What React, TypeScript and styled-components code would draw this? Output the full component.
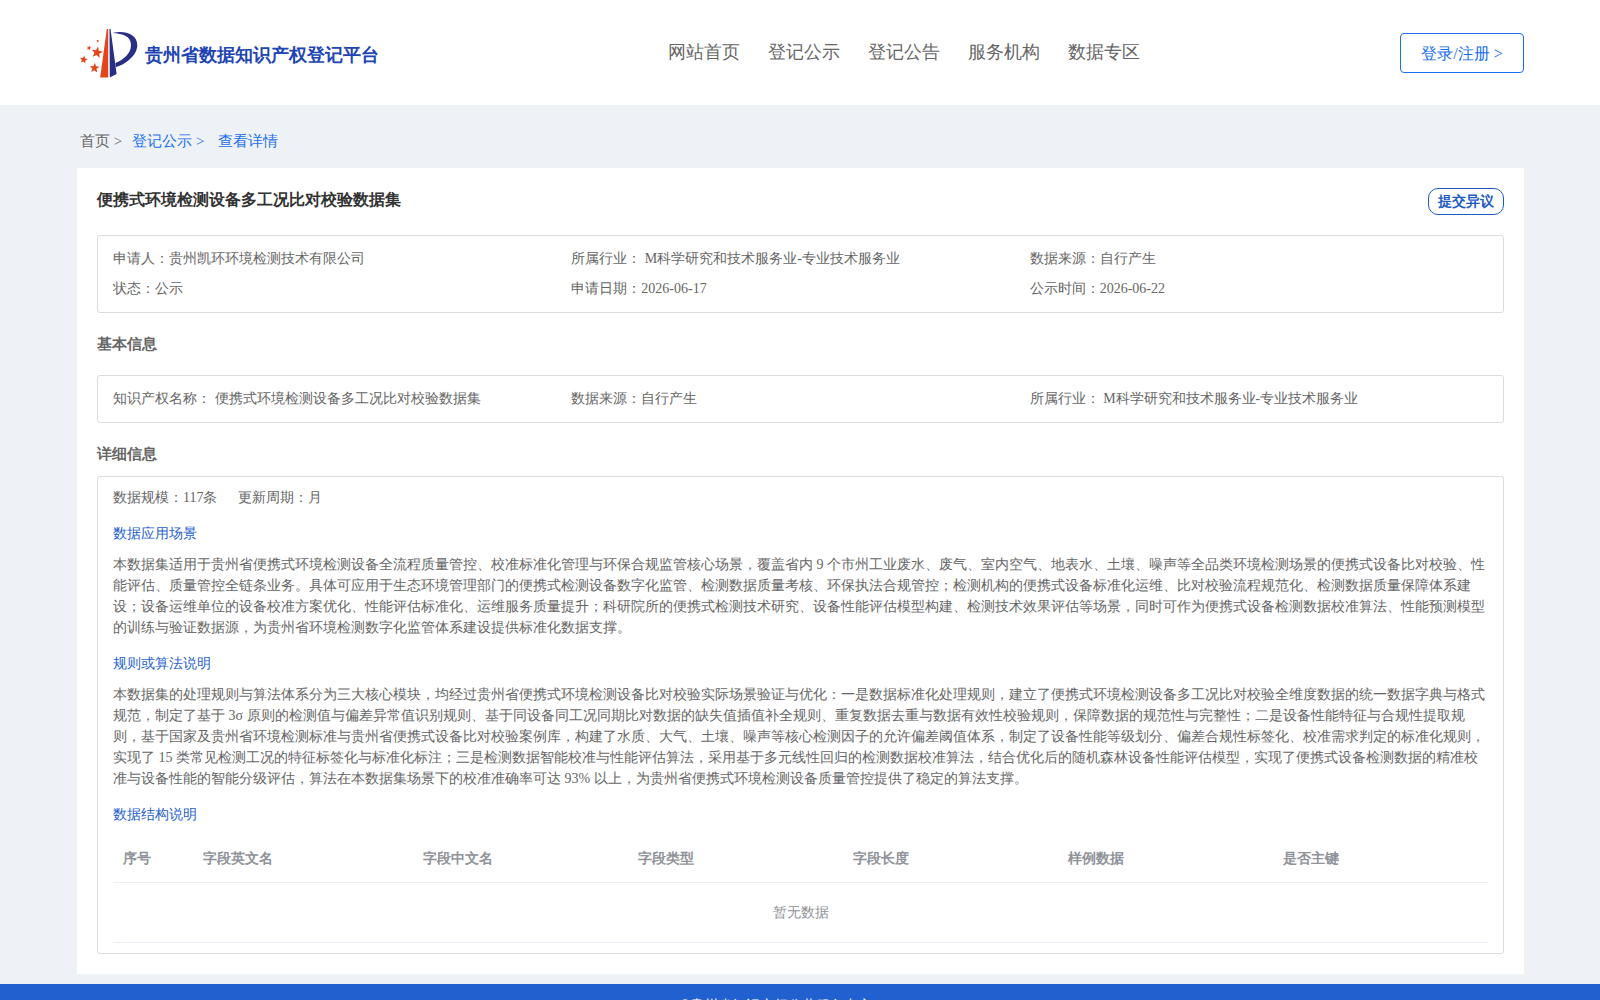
import React from "react";
import styled, { createGlobalStyle } from "styled-components";

const GlobalStyle = createGlobalStyle`
  *, *::before, *::after { box-sizing: border-box; }
  body {
    margin: 0;
    background: #eef2f6;
    color: #666;
    font-family: "Liberation Serif", serif;
    font-size: 14px;
    line-height: 20px;
  }
  h1, h2, h3, p, dl, dd { margin: 0; }
  a { text-decoration: none; color: inherit; }
`;

const Header = styled.header`
  display: flex;
  align-items: center;
  justify-content: space-between;
  height: 105px;
  padding: 0 76px 0 77px;
  background: #fff;
`;

const Brand = styled.a`
  display: flex;
  align-items: center;
  gap: 6px;
  padding: 4px 28px 0 0;
  color: #2144b4;
  font-size: 18px;
  font-weight: 700;
  line-height: 26px;
`;

const LogoMark = styled.svg`
  width: 62px;
  height: 54px;
`;

const Nav = styled.nav`
  display: flex;
  gap: 28px;
  padding-bottom: 2px;
  font-size: 18px;
  line-height: 26px;
`;

const LoginButton = styled.button`
  min-width: 124px;
  height: 40px;
  padding: 3px 20px 0;
  border: 1px solid #1a6fef;
  border-radius: 4px;
  background: #fff;
  color: #1a6fef;
  font-family: inherit;
  font-size: 16px;
`;

const Main = styled.main`
  padding: 0 76px 10px 77px;
`;

const Breadcrumb = styled.nav`
  display: flex;
  align-items: center;
  height: 63px;
  padding: 8px 3px 0;
  font-size: 15px;
`;

const Crumb = styled.a<{ $active?: boolean; $gap?: number }>`
  margin-right: ${(p) => p.$gap ?? 0}px;
  color: ${(p) => (p.$active ? "#1a6fef" : "#666")};
`;

const Panel = styled.article`
  padding: 20px;
  background: #fff;
`;

const TitleRow = styled.div`
  display: flex;
  align-items: flex-start;
  justify-content: space-between;
  height: 47px;
`;

const Title = styled.h1`
  color: #333;
  font-size: 16px;
  line-height: 24px;
`;

const ObjectionButton = styled.button`
  height: 27px;
  padding: 0 9px;
  border: 1px solid #1f5bc4;
  border-radius: 10px;
  background: #fff;
  color: #1f5bc4;
  font-family: inherit;
  font-size: 14px;
  font-weight: 700;
`;

const InfoBox = styled.dl`
  display: grid;
  grid-template-columns: repeat(3, 1fr);
  padding: 8px 15px;
  border: 1px solid #dcdcdc;
  border-radius: 3px;
  line-height: 30px;
`;

const InfoItem = styled.div`
  display: flex;
`;

const SectionTitle = styled.h2<{ $tall?: boolean }>`
  height: ${(p) => (p.$tall ? 62 : 53)}px;
  padding-top: 21px;
  font-size: 15px;
  line-height: 20px;
`;

const DetailBox = styled.section`
  padding: 11px 15px 10px;
  border: 1px solid #dcdcdc;
  border-radius: 3px;
`;

const Summary = styled.p`
  display: flex;
  gap: 21px;
`;

const SubTitle = styled.h3`
  margin: 16px 0 10px;
  color: #1f5fcf;
  font-size: 14px;
  font-weight: 400;
  line-height: 20px;
`;

const Paragraph = styled.p`
  line-height: 21px;
`;

const FieldTable = styled.table`
  width: 100%;
  table-layout: fixed;
  border-collapse: collapse;
  color: #909399;
`;

const FieldHead = styled.th<{ $width?: string }>`
  width: ${(p) => p.$width ?? "auto"};
  height: 47px;
  padding: 2px 10px 0;
  border-bottom: 1px solid #ebeef5;
  text-align: left;
`;

const EmptyCell = styled.td`
  height: 60px;
  padding: 2px 0 0;
  border-bottom: 1px solid #ebeef5;
  text-align: center;
`;

const Footer = styled.footer`
  padding: 12px 48px 12px 0;
  background: #2160cf;
  color: #fff;
  text-align: center;
`;

type Info = { label: string; value: string };

const applicationInfo: Info[] = [
  { label: "申请人：", value: "贵州凯环环境检测技术有限公司" },
  { label: "所属行业：\u00a0", value: "M科学研究和技术服务业-专业技术服务业" },
  { label: "数据来源：", value: "自行产生" },
  { label: "状态：", value: "公示" },
  { label: "申请日期：", value: "2026-06-17" },
  { label: "公示时间：", value: "2026-06-22" },
];

const basicInfo: Info[] = [
  { label: "知识产权名称：\u00a0", value: "便携式环境检测设备多工况比对校验数据集" },
  { label: "数据来源：", value: "自行产生" },
  { label: "所属行业：\u00a0", value: "M科学研究和技术服务业-专业技术服务业" },
];

const columns = [
  { name: "序号", width: "80px" },
  { name: "字段英文名", width: "16%" },
  { name: "字段中文名" },
  { name: "字段类型" },
  { name: "字段长度" },
  { name: "样例数据" },
  { name: "是否主键" },
];

const star = "0,-1 .25,-.34 .95,-.31 .4,.13 .59,.81 0,.42 -.59,.81 -.4,.13 -.95,-.31 -.25,-.34";
const stars = [
  { x: 20, y: 24.5, size: 6, turn: 10 },
  { x: 17.5, y: 40, size: 5.2, turn: 5 },
  { x: 6.7, y: 31.7, size: 4.2, turn: 10 },
  { x: 12, y: 20, size: 2.6, turn: 15 },
  { x: 20.7, y: 13, size: 1.6, turn: 0 },
];

function Logo() {
  return (
    <LogoMark viewBox="0 0 62 54" aria-hidden="true">
      <g fill="#e5441a">
        {stars.map((s) => (
          <polygon
            key={`${s.x}-${s.y}`}
            points={star}
            transform={`translate(${s.x} ${s.y}) rotate(${s.turn}) scale(${s.size})`}
          />
        ))}
        <path d="M29.800 1h1.400v48.500h-8z" />
      </g>
      <g fill="#2a2f86">
        <path d="M32.500 1h1l6.100 45-6.800 3.500z" />
        <path d="M35.500 5C47 2 60.300 6 60.300 17 60.300 27.500 49 36 38.700 39.300L38.400 35C46 32 54 26 54 17 54 8.500 46 5.500 35.500 5z" />
      </g>
    </LogoMark>
  );
}

function InfoGrid({ items }: { items: Info[] }) {
  return (
    <InfoBox>
      {items.map((item) => (
        <InfoItem key={item.label}>
          <dt>{item.label}</dt>
          <dd>{item.value}</dd>
        </InfoItem>
      ))}
    </InfoBox>
  );
}

export default function App() {
  return (
    <>
      <GlobalStyle />
      <Header>
        <Brand href="#">
          <Logo />
          贵州省数据知识产权登记平台
        </Brand>
        <Nav>
          {["网站首页", "登记公示", "登记公告", "服务机构", "数据专区"].map((name) => (
            <a href="#" key={name}>{name}</a>
          ))}
        </Nav>
        <LoginButton type="button">登录/注册 &gt;</LoginButton>
      </Header>
      <Main>
        <Breadcrumb>
          <Crumb href="#" $gap={10}>首页 &gt;</Crumb>
          <Crumb href="#" $active $gap={14}>登记公示 &gt;</Crumb>
          <Crumb href="#" $active>查看详情</Crumb>
        </Breadcrumb>
        <Panel>
          <TitleRow>
            <Title>便携式环境检测设备多工况比对校验数据集</Title>
            <ObjectionButton type="button">提交异议</ObjectionButton>
          </TitleRow>
          <InfoGrid items={applicationInfo} />
          <SectionTitle $tall>基本信息</SectionTitle>
          <InfoGrid items={basicInfo} />
          <SectionTitle>详细信息</SectionTitle>
          <DetailBox>
            <Summary>
              <span>数据规模：117条</span>
              <span>更新周期：月</span>
            </Summary>
            <SubTitle>数据应用场景</SubTitle>
            <Paragraph>
              本数据集适用于贵州省便携式环境检测设备全流程质量管控、校准标准化管理与环保合规监管核心场景，覆盖省内 9 个市州工业废水、废气、室内空气、地表水、土壤、噪声等全品类环境检测场景的便携式设备比对校验、性能评估、质量管控全链条业务。具体可应用于生态环境管理部门的便携式检测设备数字化监管、检测数据质量考核、环保执法合规管控；检测机构的便携式设备标准化运维、比对校验流程规范化、检测数据质量保障体系建设；设备运维单位的设备校准方案优化、性能评估标准化、运维服务质量提升；科研院所的便携式检测技术研究、设备性能评估模型构建、检测技术效果评估等场景，同时可作为便携式设备检测数据校准算法、性能预测模型的训练与验证数据源，为贵州省环境检测数字化监管体系建设提供标准化数据支撑。
            </Paragraph>
            <SubTitle>规则或算法说明</SubTitle>
            <Paragraph>
              本数据集的处理规则与算法体系分为三大核心模块，均经过贵州省便携式环境检测设备比对校验实际场景验证与优化：一是数据标准化处理规则，建立了便携式环境检测设备多工况比对校验全维度数据的统一数据字典与格式规范，制定了基于 3σ 原则的检测值与偏差异常值识别规则、基于同设备同工况同期比对数据的缺失值插值补全规则、重复数据去重与数据有效性校验规则，保障数据的规范性与完整性；二是设备性能特征与合规性提取规则，基于国家及贵州省环境检测标准与贵州省便携式设备比对校验案例库，构建了水质、大气、土壤、噪声等核心检测因子的允许偏差阈值体系，制定了设备性能等级划分、偏差合规性标签化、校准需求判定的标准化规则，实现了 15 类常见检测工况的特征标签化与标准化标注；三是检测数据智能校准与性能评估算法，采用基于多元线性回归的检测数据校准算法，结合优化后的随机森林设备性能评估模型，实现了便携式设备检测数据的精准校准与设备性能的智能分级评估，算法在本数据集场景下的校准准确率可达 93% 以上，为贵州省便携式环境检测设备质量管控提供了稳定的算法支撑。
            </Paragraph>
            <SubTitle>数据结构说明</SubTitle>
            <FieldTable>
              <thead>
                <tr>
                  {columns.map((c) => (
                    <FieldHead key={c.name} $width={c.width} scope="col">{c.name}</FieldHead>
                  ))}
                </tr>
              </thead>
              <tbody>
                <tr>
                  <EmptyCell colSpan={columns.length}>暂无数据</EmptyCell>
                </tr>
              </tbody>
            </FieldTable>
          </DetailBox>
        </Panel>
      </Main>
      <Footer>©贵州省知识产权公共服务中心</Footer>
    </>
  );
}
